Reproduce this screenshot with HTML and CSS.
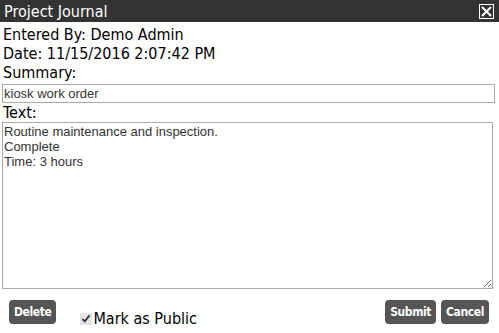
FILE: index.html
```html
<!DOCTYPE html>
<html lang="en">
<head>
  <meta charset="UTF-8" />
  <title>Project Journal</title>
  <link rel="stylesheet" href="styles.css">
</head>
<body>
  <div class="dialog">
    <div class="titlebar">
      <span class="title">Project Journal</span>
      <span class="close">
        <svg width="11" height="11" viewBox="0 0 11 11"><path d="M1 1L10 10M10 1L1 10" stroke="#fff" stroke-width="2"/></svg>
      </span>
    </div>

    <div class="content">
      <div class="line">Entered By: Demo Admin</div>
      <div class="line">Date: 11/15/2016 2:07:42 PM</div>
      <div class="line">Summary:</div>
      <input class="summary" type="text" value="kiosk work order">
      <div class="line">Text:</div>
      <textarea class="text">Routine maintenance and inspection.
Complete
Time: 3 hours</textarea>
    </div>

    <div class="actions">
      <button class="btn">Delete</button>
      <label class="public"><input type="checkbox" checked>Mark as Public</label>
      <div class="spacer"></div>
      <button class="btn">Submit</button>
      <button class="btn">Cancel</button>
    </div>
  </div>
</body>
</html>
```

FILE: styles.css
```css
body {
  margin: 0;
  background: #fff;
  font-family: "DejaVu Sans Condensed", "DejaVu Sans", sans-serif;
  color: #000;
}
.titlebar {
  height: 22px;
  background: #333;
  color: #fff;
  display: flex;
  align-items: center;
  justify-content: space-between;
  padding: 0 5px 0 4px;
}
.title {
  font-size: 16px;
}
.close {
  width: 13px;
  height: 13px;
  border: 1px solid #fff;
  display: flex;
  align-items: center;
  justify-content: center;
}
.content {
  padding: 3px 2px 0 2px;
}
.line {
  font-size: 16px;
  line-height: 19px;
  padding-left: 1px;
}
.summary {
  display: block;
  box-sizing: border-box;
  width: 493px;
  height: 19px;
  margin: 2px 0 0;
  border: 1px solid #a9a9a9;
  padding: 0 1px;
  font: 13px "Liberation Sans", Arial, sans-serif;
  color: #333;
}
.text {
  display: block;
  box-sizing: border-box;
  width: 491px;
  height: 167px;
  margin: 0;
  border: 1px solid #a9a9a9;
  padding: 1px 1px;
  font: 13px/15px "Liberation Sans", Arial, sans-serif;
  color: #333;
  resize: both;
}
.actions {
  display: flex;
  align-items: flex-start;
  padding: 11px 10px 0 9px;
}
.btn {
  height: 24px;
  background: #555;
  color: #fff;
  border: none;
  border-radius: 4px;
  padding: 0 5px;
  font: bold 12px "DejaVu Sans Condensed", sans-serif;
  letter-spacing: -0.4px;
  cursor: pointer;
}
.btn + .btn {
  margin-left: 5px;
}
.public {
  display: flex;
  align-items: center;
  margin: 9px 0 0 24px;
  font-size: 16px;
  line-height: 19px;
}
.public input {
  margin: 0 1px 0 0;
  width: 12px;
  height: 12px;
  accent-color: #e4e4e4;
}
.spacer {
  flex: 1;
}
```
